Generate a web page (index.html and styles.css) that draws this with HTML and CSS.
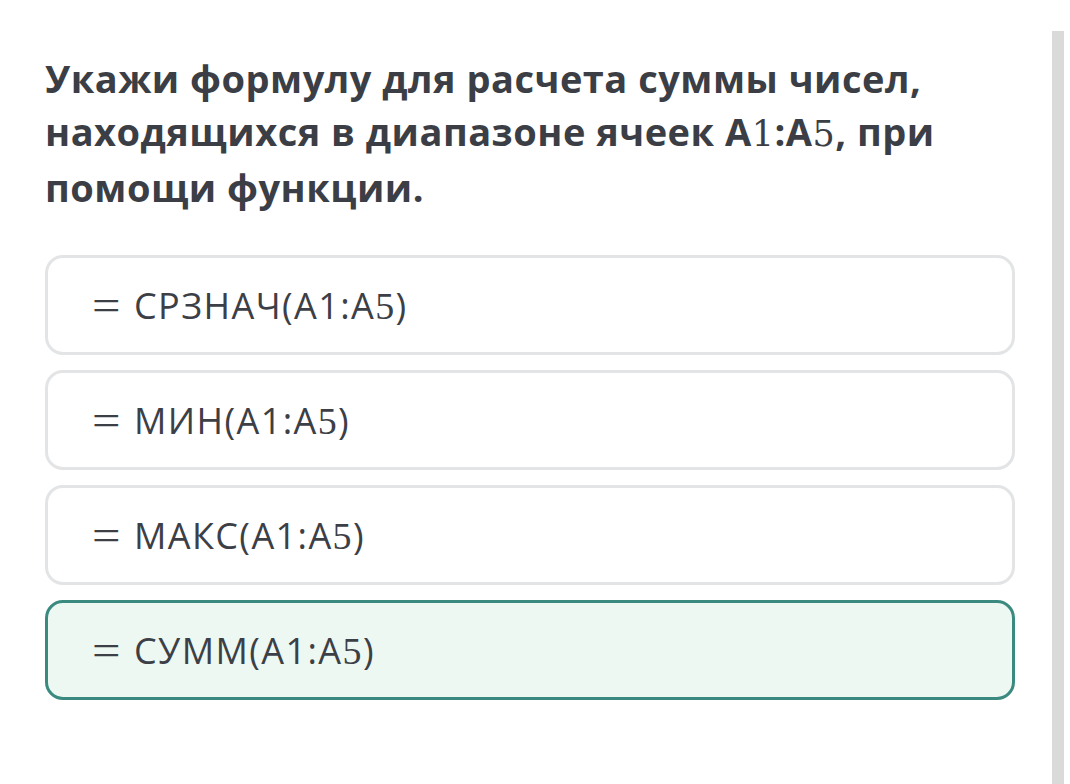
FILE: index.html
```html
<!DOCTYPE html>
<html lang="ru">
<head>
<meta charset="utf-8">
<link rel="stylesheet" href="styles.css">
</head>
<body>
<div class="page">
  <main class="content">
    <h1 class="question">Укажи формулу для расчета суммы чисел, находящихся в диапазоне ячеек A<span class="num">1</span>:A<span class="num">5</span>, при помощи функции.</h1>
    <div class="options">
      <div class="option"><span class="eq">=</span><span class="label">СРЗНАЧ(A1:A<span class="dig">5</span>)</span></div>
      <div class="option"><span class="eq">=</span><span class="label">МИН(A1:A<span class="dig">5</span>)</span></div>
      <div class="option"><span class="eq">=</span><span class="label">МАКС(A1:A<span class="dig">5</span>)</span></div>
      <div class="option selected"><span class="eq">=</span><span class="label">СУММ(A1:A<span class="dig">5</span>)</span></div>
    </div>
  </main>
  <div class="scrollbar"></div>
</div>
</body>
</html>
```

FILE: styles.css
```css
html, body {
  margin: 0;
  padding: 0;
  background: #ffffff;
}

.page {
  display: flex;
  width: 1070px;
  height: 784px;
  overflow: hidden;
}

.content {
  width: 970px;
  padding: 52px 0 0 45px;
  flex: none;
}

.question {
  margin: 0;
  font-family: "Open Sans", "Noto Sans", sans-serif;
  font-weight: 700;
  font-size: 38px;
  line-height: 53px;
  color: #3b3e45;
  letter-spacing: 0.5px;
}

.question .num {
  font-family: "DejaVu Serif", "Liberation Serif", serif;
  font-weight: 400;
  font-size: 35px;
}

.options {
  margin-top: 41px;
  display: flex;
  flex-direction: column;
  gap: 15px;
}

.option {
  box-sizing: border-box;
  height: 100px;
  border: 3px solid #e2e4e5;
  border-radius: 18px;
  display: flex;
  align-items: center;
  padding-left: 44px;
  color: #3c4046;
  background: #ffffff;
}

.option.selected {
  border-color: #3b8a80;
  background: #edf8f3;
}

.eq {
  font-family: "Liberation Serif", serif;
  font-size: 44px;
  font-weight: 400;
  width: 42px;
  line-height: 1;
  margin-top: 2px;
  transform: scaleX(1.15);
  transform-origin: left center;
}

.label {
  font-family: "Open Sans", "Noto Sans", sans-serif;
  font-size: 36px;
  font-weight: 400;
  letter-spacing: 1.4px;
}

.dig {
  font-family: "Liberation Serif", serif;
  font-size: 38px;
}

.scrollbar {
  margin-left: 37px;
  margin-top: 31px;
  width: 12px;
  height: 753px;
  background: #dadada;
  flex: none;
}
```
